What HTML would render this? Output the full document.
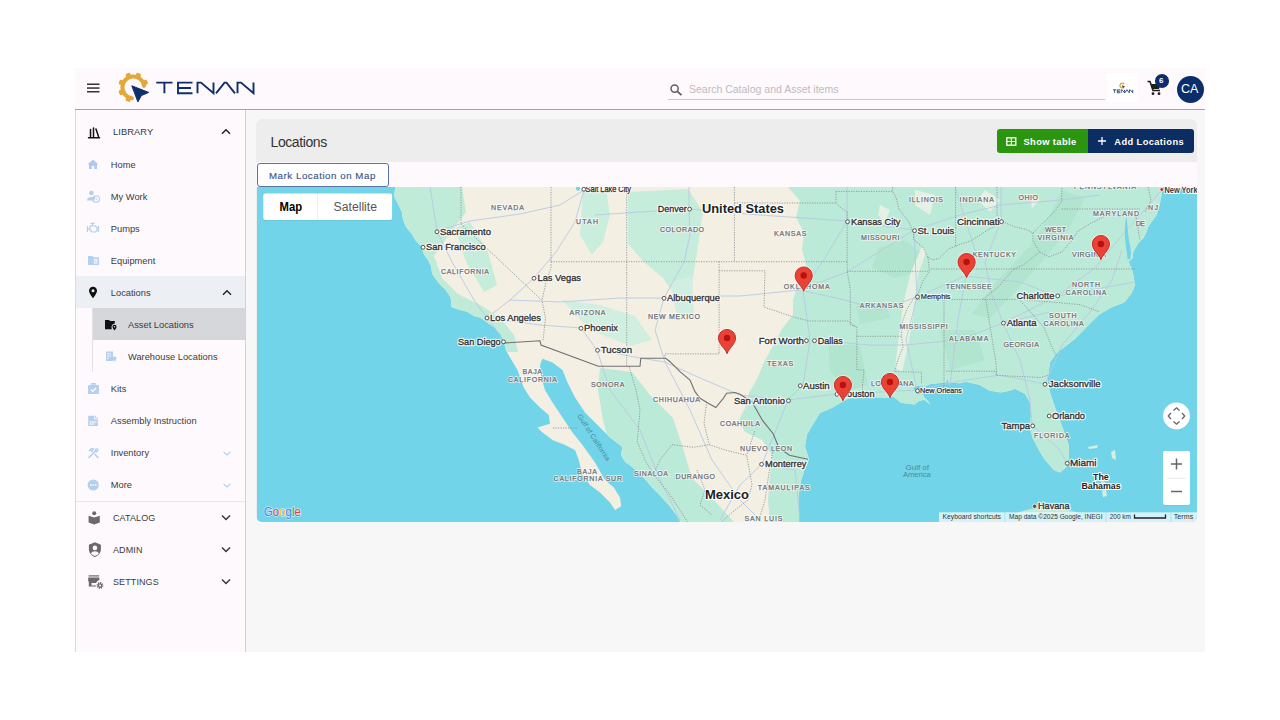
<!DOCTYPE html>
<html><head><meta charset="utf-8">
<style>
*{box-sizing:border-box;margin:0;padding:0}
html,body{width:1280px;height:720px;background:#fff;overflow:hidden;font-family:"Liberation Sans",sans-serif;position:relative}
.a{position:absolute}
#hdr{position:absolute;left:75px;top:68px;width:1130px;height:42px;background:#fdf9fd;border-bottom:1.5px solid #a6a4a6}
#side{position:absolute;left:75px;top:110px;width:171px;height:542px;background:#fdf9fd;border-left:1px solid #dcd9dc;border-right:1.5px solid #d3d1d3}
#main{position:absolute;left:246px;top:110px;width:959px;height:542px;background:#f7f7f7}
#card{position:absolute;left:256px;top:119px;width:941px;height:403px;border-radius:7px 7px 5px 5px;background:#ededed;overflow:hidden}
#tabrow{position:absolute;left:0;top:43px;width:941px;height:25px;background:#fdf9fd}
#map{position:absolute;left:1px;top:68px;width:940px;height:335px;background:#72d4e8;overflow:hidden;border-radius:0 0 5px 5px}
#map svg{position:absolute;left:0;top:0}
.t{position:absolute;white-space:nowrap;font-size:9.3px;color:#3d3a3d;line-height:1}
.sec{font-size:9px;color:#3d3a3d;letter-spacing:0.1px}
.ic{position:absolute;overflow:visible}

</style></head><body>
<div id="main"></div>
<div id="hdr"></div>
<div id="side"></div>
<!-- header -->
<svg class="ic" style="left:87px;top:83px" width="13" height="10" viewBox="0 0 13 10"><rect x="0" y="0.5" width="12.5" height="1.5" fill="#333"/><rect x="0" y="4.3" width="12.5" height="1.5" fill="#333"/><rect x="0" y="8" width="12.5" height="1.5" fill="#333"/></svg>
<svg class="ic" style="left:116px;top:70px" width="142" height="36" viewBox="116 70 142 36">
 <path d="M131.97,98.22 A10.9,10.9 0 1,1 144.09,85.88" fill="none" stroke="#e2a93a" stroke-width="4" stroke-linecap="round"/><rect x="130.80" y="72.20" width="5" height="4.5" rx="1.4" fill="#e2a93a" transform="rotate(202.5 133.3 87.4)"/><rect x="130.80" y="72.20" width="5" height="4.5" rx="1.4" fill="#e2a93a" transform="rotate(247.5 133.3 87.4)"/><rect x="130.80" y="72.20" width="5" height="4.5" rx="1.4" fill="#e2a93a" transform="rotate(292.5 133.3 87.4)"/><rect x="130.80" y="72.20" width="5" height="4.5" rx="1.4" fill="#e2a93a" transform="rotate(337.5 133.3 87.4)"/><rect x="130.80" y="72.20" width="5" height="4.5" rx="1.4" fill="#e2a93a" transform="rotate(382.5 133.3 87.4)"/><rect x="130.80" y="72.20" width="5" height="4.5" rx="1.4" fill="#e2a93a" transform="rotate(427.5 133.3 87.4)"/>
 <path d="M131.8,85.8 L148.7,92.4 L141.4,95.6 L137.9,101.9 Z" fill="#0e2f6a" stroke="#0e2f6a" stroke-width="1" stroke-linejoin="round"/>
 <g fill="none" stroke="#0e2f6a" stroke-width="1.9">
  <path d="M156.3,82.6 H172.5 M164.4,82.6 V93.3"/>
  <path d="M192.5,82.6 H178 V93.3 H192.5 M178,88 H191"/>
  <path d="M197.5,93.3 V82.6 H201 L213.5,93.3 V82.6" stroke-linejoin="miter"/>
  <path d="M216,93.3 L224.5,82.6 H226.5 L235,93.3"/>
  <path d="M237.5,93.3 V82.6 H241 L253.5,93.3 V82.6"/>
 </g>
</svg>
<svg class="ic" style="left:670px;top:84px" width="13" height="12" viewBox="0 0 13 12"><circle cx="4.6" cy="4.6" r="3.6" fill="none" stroke="#5f5f5f" stroke-width="1.5"/><path d="M7.3,7.3 L11.5,11.2" stroke="#5f5f5f" stroke-width="1.8"/></svg>
<div class="t" style="left:689px;top:84px;font-size:10.5px;color:#bdbbbd">Search Catalog and Asset items</div>
<div class="a" style="left:668px;top:99px;width:437px;height:1.3px;background:#c9c7c9"></div>
<div class="a" style="left:1107px;top:73px;width:31px;height:29px;background:#fff"></div>
<svg class="ic" style="left:1100px;top:75px" width="40" height="25" viewBox="1100 75 40 25">
<circle cx="1122.3" cy="85.6" r="2.3" fill="none" stroke="#e2a93a" stroke-width="1.3" stroke-dasharray="11,3.5" transform="rotate(20 1122.3 85.6)"/>
<path d="M1121.8,85.2 L1125,86.4 L1123.6,86.9 L1123.1,88.3 Z" fill="#0e2f6a"/>
<g fill="none" stroke="#0e2f6a" stroke-width="0.8" transform="translate(1081.01,66.67) scale(0.204,0.28)" vector-effect="non-scaling-stroke">
  <path vector-effect="non-scaling-stroke" d="M156.3,82.6 H172.5 M164.4,82.6 V93.3"/>
  <path vector-effect="non-scaling-stroke" d="M192.5,82.6 H178 V93.3 H192.5 M178,88 H191"/>
  <path vector-effect="non-scaling-stroke" d="M197.5,93.3 V82.6 H201 L213.5,93.3 V82.6"/>
  <path vector-effect="non-scaling-stroke" d="M216,93.3 L224.5,82.6 H226.5 L235,93.3"/>
  <path vector-effect="non-scaling-stroke" d="M237.5,93.3 V82.6 H241 L253.5,93.3 V82.6"/>
</g></svg>
<svg class="ic" style="left:1147px;top:80px" width="15" height="16" viewBox="0 0 15 16"><path d="M0.5,1.5 H3 L6,10.5 H13" fill="none" stroke="#1d1d1d" stroke-width="1.6"/><path d="M4,4 H13.5 L12,9 H5.5 Z" fill="#1d1d1d"/><circle cx="6" cy="13.7" r="1.4" fill="#1d1d1d"/><circle cx="12" cy="13.7" r="1.4" fill="#1d1d1d"/></svg>
<div class="a" style="left:1155px;top:74px;width:14px;height:13.5px;border-radius:50%;background:#0c2d6b"></div>
<div class="t" style="left:1159px;top:76.5px;font-size:8px;font-weight:700;color:#fff">6</div>
<div class="a" style="left:1176.5px;top:75.5px;width:27px;height:27px;border-radius:50%;background:#0c2d6b"></div>
<div class="t" style="left:1181px;top:83px;font-size:12.5px;color:#fff">CA</div>

<!-- sidebar -->
<div class="a" style="left:76px;top:276px;width:168.5px;height:32px;background:#eceff3"></div>
<div class="a" style="left:93px;top:308px;width:151.5px;height:32px;background:#d5d7db"></div>
<div class="a" style="left:92px;top:308px;width:1px;height:64px;background:#e3e1e6"></div>
<div class="a" style="left:76px;top:501px;width:168.5px;height:1px;background:#e8e6e9"></div>

<svg class="ic" style="left:87px;top:125px" width="14" height="14" viewBox="0 0 14 14"><g stroke="#111" stroke-width="1.5" stroke-linecap="round"><path d="M3.5,4.5 V11.5 M6.5,3 V11.5 M9,4 L11.5,11.5"/><path d="M1.5,12.7 H12.5"/></g></svg>
<div class="t sec" style="left:113px;top:128.3px;font-size:9.3px;color:#3a373a">LIBRARY</div>
<svg class="ic" style="left:221px;top:128px" width="10" height="7" viewBox="0 0 10 7"><path d="M1,5.8 L5,1.8 L9,5.8" fill="none" stroke="#222" stroke-width="1.5"/></svg>

<svg class="ic" style="left:87px;top:158px" width="12" height="12" viewBox="0 0 12 12"><path d="M6,1.5 L11.5,6.5 H10 V11 H7.3 V8 H4.7 V11 H2 V6.5 H0.5 Z" fill="#aecbed"/></svg>
<div class="t" style="left:110.8px;top:161.1px">Home</div>
<svg class="ic" style="left:86px;top:189px" width="16" height="14" viewBox="0 0 16 14"><circle cx="5.4" cy="4" r="2.3" fill="#b2cfee"/><path d="M1,11.5 C1,9 3.5,8 6,8 L9,8 L8.5,11.5 Z" fill="#b2cfee"/><circle cx="10.2" cy="10" r="3.3" fill="none" stroke="#b2cfee" stroke-width="1.1"/><path d="M10,8.3 V10.2 L11.2,11.2" stroke="#b2cfee" stroke-width="0.9" fill="none"/></svg>
<div class="t" style="left:110.8px;top:193.1px">My Work</div>
<svg class="ic" style="left:86px;top:221px" width="14" height="13" viewBox="0 0 14 13"><g fill="none" stroke="#b2cfee" stroke-width="1.2"><path d="M4.5,2.3 H8.5 M6.5,2.3 V4.5 M4,5 H9.5 L11,6.8 V9.5 L9.5,11 H6 L4,9 Z M1.5,5 V11 M1.5,8 H4 M12.5,5 V11 M11,8 H12.5"/></g></svg>
<div class="t" style="left:110.8px;top:225.1px">Pumps</div>
<svg class="ic" style="left:87px;top:255px" width="13" height="11" viewBox="0 0 13 11"><path d="M1,1 H5.5 L6.5,2.2 H12 V10 H1 Z" fill="#b5d0ee"/><rect x="7" y="3.8" width="3.5" height="4.8" fill="#fdf9fd"/><path d="M8.75,3.8 V8.6 M7,6.2 H10.5" stroke="#b5d0ee" stroke-width="0.6"/></svg>
<div class="t" style="left:110.8px;top:257.1px">Equipment</div>

<svg class="ic" style="left:88px;top:286px" width="10" height="13" viewBox="0 0 10 13"><path d="M5,0.8 C2.5,0.8 1,2.6 1,4.8 C1,7.6 5,12.3 5,12.3 C5,12.3 9,7.6 9,4.8 C9,2.6 7.5,0.8 5,0.8 Z" fill="#111"/><circle cx="5" cy="4.8" r="1.5" fill="#eceff3"/></svg>
<div class="t" style="left:110.8px;top:289.1px">Locations</div>
<svg class="ic" style="left:222px;top:289px" width="10" height="7" viewBox="0 0 10 7"><path d="M1,5.8 L5,1.8 L9,5.8" fill="none" stroke="#222" stroke-width="1.4"/></svg>

<svg class="ic" style="left:104px;top:319px" width="14" height="12" viewBox="0 0 14 12"><path d="M1,1 H5 L6.2,2 H10.8 V4.5 C8.5,4.8 7.5,6.5 7.5,8.5 L7.8,10.2 H1 Z" fill="#111"/><path d="M10.5,5.8 C9.2,5.8 8.5,6.7 8.5,7.8 C8.5,9.2 10.5,11.5 10.5,11.5 C10.5,11.5 12.5,9.2 12.5,7.8 C12.5,6.7 11.8,5.8 10.5,5.8 Z" fill="#111"/><circle cx="10.5" cy="7.8" r="0.7" fill="#d5d7db"/></svg>
<div class="t" style="left:128px;top:321.1px">Asset Locations</div>
<svg class="ic" style="left:104px;top:350px" width="14" height="13" viewBox="0 0 14 13"><g fill="#b5d0ee"><rect x="2" y="1.5" width="7" height="9.5"/></g><g fill="#fdf9fd"><rect x="3.3" y="3" width="1.3" height="1.3"/><rect x="5.5" y="3" width="1.3" height="1.3"/><rect x="3.3" y="5.3" width="1.3" height="1.3"/><rect x="5.5" y="5.3" width="1.3" height="1.3"/><rect x="3.3" y="7.6" width="1.3" height="1.3"/></g><path d="M10.5,6.5 C9.4,6.5 8.6,7.3 8.6,8.3 C8.6,9.6 10.5,11.8 10.5,11.8 C10.5,11.8 12.4,9.6 12.4,8.3 C12.4,7.3 11.6,6.5 10.5,6.5 Z" fill="#b5d0ee"/></svg>
<div class="t" style="left:128px;top:353.1px">Warehouse Locations</div>

<svg class="ic" style="left:87px;top:382px" width="13" height="13" viewBox="0 0 13 13"><path d="M4.3,3 V1.5 H8.7 V3 M5.5,3 V2.6 H7.5 V3" fill="none" stroke="#b5d0ee" stroke-width="1"/><rect x="1" y="3" width="11" height="9" rx="0.8" fill="#b5d0ee"/><path d="M4,7.5 L5.8,9.3 L9,6" fill="none" stroke="#fff" stroke-width="1.2"/></svg>
<div class="t" style="left:110.8px;top:385.1px">Kits</div>
<svg class="ic" style="left:87px;top:414px" width="12" height="13" viewBox="0 0 12 13"><path d="M1.2,1.8 H8 L10.8,4.6 V12 H1.2 Z" fill="#b5d0ee"/><path d="M7.5,2.5 V5 H10" fill="none" stroke="#fff" stroke-width="0.9"/><path d="M2.5,8 H9.5 M2.5,10 H7.5" stroke="#fff" stroke-width="1"/></svg>
<div class="t" style="left:110.8px;top:417.1px">Assembly Instruction</div>
<svg class="ic" style="left:87px;top:446px" width="13" height="13" viewBox="0 0 13 13"><g fill="none" stroke="#b2cfee" stroke-width="1.6" stroke-linecap="round"><path d="M2,11.5 L9,4.5 M8,8.5 L11,11.5"/><path d="M2.5,4.5 L4.5,2.5 L6.5,3 L5,5.5 Z" stroke-width="1.4"/><path d="M10.5,3 C11.5,4 11,5.5 9.5,5.8 L8.5,4.5 C8.5,3 9.5,2.5 10.5,3 Z" stroke-width="1.2"/></g></svg>
<div class="t" style="left:110.8px;top:449.1px">Inventory</div>
<svg class="ic" style="left:222px;top:450px" width="10" height="7" viewBox="0 0 10 7"><path d="M1.5,1.8 L5,5 L8.5,1.8" fill="none" stroke="#b2cfee" stroke-width="1.1"/></svg>
<svg class="ic" style="left:87px;top:479px" width="13" height="13" viewBox="0 0 13 13"><circle cx="6.2" cy="6" r="5.6" fill="#b5d0ee"/><rect x="3" y="5.2" width="1.5" height="1.5" fill="#fff"/><rect x="5.5" y="5.2" width="1.5" height="1.5" fill="#fff"/><rect x="8" y="5.2" width="1.5" height="1.5" fill="#fff"/></svg>
<div class="t" style="left:110.8px;top:481.1px">More</div>
<svg class="ic" style="left:222px;top:482px" width="10" height="7" viewBox="0 0 10 7"><path d="M1.5,1.8 L5,5 L8.5,1.8" fill="none" stroke="#b2cfee" stroke-width="1.1"/></svg>

<svg class="ic" style="left:87px;top:510px" width="14" height="15" viewBox="0 0 14 15"><circle cx="7.2" cy="3.2" r="2" fill="#6b696b"/><path d="M1.6,5.8 L7.2,7.6 L12.8,5.8 V12.6 L7.2,14.6 L1.6,12.6 Z" fill="#6b696b"/></svg>
<div class="t sec" style="left:113px;top:514.3px">CATALOG</div>
<svg class="ic" style="left:221px;top:514px" width="10" height="7" viewBox="0 0 10 7"><path d="M1,1.5 L5,5.5 L9,1.5" fill="none" stroke="#333" stroke-width="1.4"/></svg>
<svg class="ic" style="left:87.5px;top:542.3px" width="14" height="16" viewBox="0 0 14 16"><path d="M6.9,0.3 L0.9,2.8 V7.3 C0.9,10.9 3.5,13.9 6.9,15 C10.3,13.9 12.9,10.9 12.9,7.3 V2.8 Z" fill="#6b696b"/><circle cx="6.9" cy="5.9" r="2.3" fill="#fdf9fd"/><path d="M2.9,11.6 C3.7,10.1 5.1,9.3 6.9,9.3 C8.7,9.3 10.1,10.1 10.9,11.6 C9.9,12.8 8.5,13.6 6.9,14 C5.3,13.6 3.9,12.8 2.9,11.6 Z" fill="#fdf9fd"/></svg>
<div class="t sec" style="left:113px;top:546.3px">ADMIN</div>
<svg class="ic" style="left:221px;top:546px" width="10" height="7" viewBox="0 0 10 7"><path d="M1,1.5 L5,5.5 L9,1.5" fill="none" stroke="#333" stroke-width="1.4"/></svg>
<svg class="ic" style="left:87px;top:574px" width="17" height="16" viewBox="0 0 17 16"><rect x="1.6" y="1.3" width="10.5" height="1.2" fill="#6b696b"/><path d="M1.2,3.5 H12.2 L12.5,6 C10.5,6.5 9.5,8 9.2,9 H4.5 V11.5 H8.8 L9,12.4 H1.8 V7.4 H1.2 Z" fill="#6b696b"/><circle cx="13" cy="11.5" r="2.6" fill="none" stroke="#6b696b" stroke-width="1.6" stroke-dasharray="1.2,0.8"/><circle cx="13" cy="11.5" r="1.6" fill="none" stroke="#6b696b" stroke-width="1.2"/></svg>
<div class="t sec" style="left:113px;top:578.3px">SETTINGS</div>
<svg class="ic" style="left:221px;top:578px" width="10" height="7" viewBox="0 0 10 7"><path d="M1,1.5 L5,5.5 L9,1.5" fill="none" stroke="#333" stroke-width="1.4"/></svg>

<!-- card -->
<div id="card">
 <div id="tabrow"></div>
 <div id="map"><svg width="940" height="335" viewBox="257 187 940 335" font-family="Liberation Sans, sans-serif">
<defs><clipPath id="lc"><polygon points="395.4,187.0 1162.5,187.0 1161.7,195.0 1159.2,206.7 1156.7,215.0 1151.7,221.7 1148.3,226.7 1146.7,231.7 1143.3,238.3 1138.3,243.3 1133.3,251.7 1132.5,258.3 1128.3,261.7 1131.7,268.3 1133.3,275.0 1135.0,285.0 1131.7,293.3 1125.0,301.7 1122.6,303.0 1110.8,307.7 1099.0,314.8 1087.2,326.6 1075.4,338.4 1063.6,347.8 1057.5,352.0 1050.0,362.5 1047.5,380.0 1050.0,392.5 1056.0,410.0 1062.5,427.5 1068.8,445.0 1068.8,457.5 1066.0,467.5 1060.0,472.5 1053.8,470.0 1045.0,460.0 1038.8,450.0 1032.5,437.5 1030.0,427.5 1031.0,415.0 1030.0,402.5 1025.0,393.8 1015.0,388.8 1010.5,390.5 1000.8,392.5 989.0,390.5 979.4,384.7 965.8,381.8 960.0,383.3 948.5,382.5 948.3,378.0 946.0,382.5 938.0,383.3 930.3,384.0 924.8,386.4 916.3,385.6 913.0,388.0 916.3,393.4 924.0,395.0 924.0,397.3 928.0,401.0 930.3,405.2 928.0,402.8 924.0,399.7 918.6,401.3 914.7,404.4 906.9,403.6 900.6,402.8 897.5,399.7 892.8,396.6 887.3,398.1 875.6,397.3 860.0,398.1 849.0,398.3 841.4,402.2 831.7,408.0 820.0,413.0 813.0,424.3 807.0,434.4 805.0,446.5 809.0,459.6 805.0,468.6 801.0,480.7 799.0,492.8 799.0,505.0 799.0,523.0 681.0,523.0 680.2,521.5 676.7,515.6 669.6,506.1 660.1,495.5 651.9,487.2 644.8,479.0 637.7,471.9 629.4,464.8 625.0,462.0 621.0,455.0 622.4,447.0 610.0,437.5 597.5,425.0 585.0,412.5 575.0,397.5 567.5,382.5 562.5,370.0 552.5,362.5 542.5,358.8 540.0,365.0 541.2,377.5 545.0,390.0 552.5,402.5 562.5,417.5 572.5,432.5 582.5,445.0 595.0,462.5 605.0,480.0 613.8,487.5 620.0,497.5 621.2,506.2 615.0,510.0 610.0,502.5 600.0,492.5 590.0,485.0 582.5,475.0 578.8,460.0 575.0,450.0 565.0,445.0 552.5,440.0 542.5,432.5 537.5,427.5 550.0,423.8 548.8,415.0 540.0,407.5 530.0,397.5 523.8,387.5 517.5,370.0 510.0,357.5 506.1,350.6 503.9,341.7 500.6,333.9 493.9,327.2 486.1,321.7 480.6,317.8 473.9,316.1 467.2,311.7 458.3,309.4 451.7,307.2 450.6,297.2 446.1,290.6 438.3,282.8 432.2,273.9 430.8,265.6 428.0,260.0 424.0,254.4 421.0,246.0 415.6,240.6 411.4,233.6 405.8,226.7 403.0,219.7 401.7,211.4 397.5,203.0 394.0,196.0"/></clipPath></defs>
<rect x="257" y="187" width="940" height="335" fill="#72d4e8"/>
<polygon points="395.4,187.0 1162.5,187.0 1161.7,195.0 1159.2,206.7 1156.7,215.0 1151.7,221.7 1148.3,226.7 1146.7,231.7 1143.3,238.3 1138.3,243.3 1133.3,251.7 1132.5,258.3 1128.3,261.7 1131.7,268.3 1133.3,275.0 1135.0,285.0 1131.7,293.3 1125.0,301.7 1122.6,303.0 1110.8,307.7 1099.0,314.8 1087.2,326.6 1075.4,338.4 1063.6,347.8 1057.5,352.0 1050.0,362.5 1047.5,380.0 1050.0,392.5 1056.0,410.0 1062.5,427.5 1068.8,445.0 1068.8,457.5 1066.0,467.5 1060.0,472.5 1053.8,470.0 1045.0,460.0 1038.8,450.0 1032.5,437.5 1030.0,427.5 1031.0,415.0 1030.0,402.5 1025.0,393.8 1015.0,388.8 1010.5,390.5 1000.8,392.5 989.0,390.5 979.4,384.7 965.8,381.8 960.0,383.3 948.5,382.5 948.3,378.0 946.0,382.5 938.0,383.3 930.3,384.0 924.8,386.4 916.3,385.6 913.0,388.0 916.3,393.4 924.0,395.0 924.0,397.3 928.0,401.0 930.3,405.2 928.0,402.8 924.0,399.7 918.6,401.3 914.7,404.4 906.9,403.6 900.6,402.8 897.5,399.7 892.8,396.6 887.3,398.1 875.6,397.3 860.0,398.1 849.0,398.3 841.4,402.2 831.7,408.0 820.0,413.0 813.0,424.3 807.0,434.4 805.0,446.5 809.0,459.6 805.0,468.6 801.0,480.7 799.0,492.8 799.0,505.0 799.0,523.0 681.0,523.0 680.2,521.5 676.7,515.6 669.6,506.1 660.1,495.5 651.9,487.2 644.8,479.0 637.7,471.9 629.4,464.8 625.0,462.0 621.0,455.0 622.4,447.0 610.0,437.5 597.5,425.0 585.0,412.5 575.0,397.5 567.5,382.5 562.5,370.0 552.5,362.5 542.5,358.8 540.0,365.0 541.2,377.5 545.0,390.0 552.5,402.5 562.5,417.5 572.5,432.5 582.5,445.0 595.0,462.5 605.0,480.0 613.8,487.5 620.0,497.5 621.2,506.2 615.0,510.0 610.0,502.5 600.0,492.5 590.0,485.0 582.5,475.0 578.8,460.0 575.0,450.0 565.0,445.0 552.5,440.0 542.5,432.5 537.5,427.5 550.0,423.8 548.8,415.0 540.0,407.5 530.0,397.5 523.8,387.5 517.5,370.0 510.0,357.5 506.1,350.6 503.9,341.7 500.6,333.9 493.9,327.2 486.1,321.7 480.6,317.8 473.9,316.1 467.2,311.7 458.3,309.4 451.7,307.2 450.6,297.2 446.1,290.6 438.3,282.8 432.2,273.9 430.8,265.6 428.0,260.0 424.0,254.4 421.0,246.0 415.6,240.6 411.4,233.6 405.8,226.7 403.0,219.7 401.7,211.4 397.5,203.0 394.0,196.0" fill="#f3efe3"/>
<g clip-path="url(#lc)">
 <polygon points="788.0,187.0 1200.0,187.0 1200.0,523.0 770.0,523.0 768.0,500.0 770.0,475.0 772.0,455.0 762.0,440.0 745.0,432.0 739.0,420.0 745.0,408.0 749.0,393.0 758.0,377.0 764.0,362.0 774.0,344.0 782.0,329.0 793.0,315.0 793.0,300.0 799.0,281.0 806.0,265.0 802.0,249.0 804.0,233.0 796.0,217.0 800.0,201.0" fill="#bbead8"/>
 <polygon points="600.0,368.0 632.0,372.0 650.0,395.0 673.0,418.0 683.0,448.0 692.0,478.0 712.0,498.0 735.0,523.0 640.0,523.0 612.0,455.0 603.0,420.0 598.0,390.0" fill="#bbead8"/>
 <polygon points="380.0,187.0 462.0,187.0 466.0,212.0 448.0,236.0 434.0,256.0 442.0,278.0 458.0,294.0 482.0,306.0 500.0,318.0 514.0,335.0 518.0,352.0 380.0,352.0" fill="#c0ebd9"/>
 <polygon points="455.0,228.0 470.0,222.0 488.0,252.0 497.0,285.0 484.0,292.0 466.0,262.0" fill="#c6eddc"/>
 <polygon points="583.0,190.0 606.0,190.0 610.0,215.0 603.0,242.0 592.0,255.0 580.0,235.0" fill="#c9eedd"/>
 <polygon points="628.0,192.0 688.0,189.0 703.0,212.0 698.0,246.0 692.0,284.0 678.0,300.0 663.0,278.0 644.0,262.0 628.0,244.0" fill="#c6eddc"/>
 <polygon points="562.0,300.0 600.0,305.0 635.0,316.0 652.0,340.0 630.0,346.0 590.0,330.0" fill="#d0efe0"/>
 <polygon points="670.0,282.0 692.0,276.0 694.0,318.0 676.0,312.0" fill="#d0efe0"/>
 <polygon points="878.0,248.0 905.0,240.0 920.0,252.0 918.0,272.0 895.0,278.0 872.0,268.0" fill="#b2e5cf"/><polygon points="856.0,306.0 885.0,302.0 890.0,318.0 860.0,324.0" fill="#b2e5cf"/><polygon points="1062.0,190.0 1085.0,198.0 1068.0,230.0 1045.0,258.0 1015.0,292.0 990.0,318.0 972.0,314.0 996.0,282.0 1030.0,246.0 1050.0,215.0" fill="#b2e5cf"/><polygon points="828.0,345.0 860.0,345.0 868.0,385.0 845.0,392.0 830.0,370.0" fill="#b2e5cf"/><polygon points="940.0,330.0 975.0,330.0 985.0,360.0 950.0,370.0" fill="#b2e5cf"/><polygon points="922.0,246.0 926.0,252.0 918.0,275.0 915.0,300.0 911.0,330.0 907.0,350.0 902.0,372.0 895.0,368.0 899.0,335.0 903.0,305.0 910.0,275.0" fill="#e6f1e4"/><polygon points="880.0,205.0 890.0,210.0 885.0,222.0 878.0,215.0" fill="#e6f1e4"/><polygon points="1030.0,195.0 1040.0,200.0 1032.0,208.0" fill="#e6f1e4"/><polygon points="915.0,190.0 935.0,195.0 930.0,215.0 915.0,205.0" fill="#e6f1e4"/><polygon points="985.0,190.0 1000.0,200.0 990.0,212.0 978.0,200.0" fill="#e6f1e4"/>
</g>
<ellipse cx="578" cy="188.5" rx="2" ry="2.2" fill="#72d4e8"/>
<path d="M1018,512.5 C1030,508 1045,507 1060,509 C1068,510 1075,512 1080,513 L1018,514 Z" fill="#c0ebd9"/>
<g fill="#d6efe0"><path d="M1101,481 L1105,482 L1107,496 L1103,497 Z"/><path d="M1111,452 L1115,450 L1116,460 L1112,458 Z"/><path d="M1088,447 L1098,445 L1097,448 L1089,449 Z"/></g>
<g fill="none" stroke="#b9c8e3" stroke-width="0.9" stroke-linejoin="round"><polyline points="430.0,187.0 437.0,231.0 452.0,262.0 474.0,300.0 487.0,318.0 495.0,328.0 503.0,341.0"/><polyline points="437.0,231.0 470.0,221.0 520.0,214.0 560.0,205.0 584.0,190.0"/><polyline points="487.0,318.0 510.0,300.0 534.0,278.0 556.0,252.0 575.0,222.0 584.0,190.0"/><polyline points="487.0,318.0 540.0,325.0 581.0,328.0 597.0,350.0 640.0,358.0 665.0,362.0 700.0,378.0 740.0,395.0 788.0,400.0 837.0,394.0 880.0,392.0 917.0,390.0 960.0,381.0 1000.0,375.0 1045.0,384.0"/><polyline points="510.0,300.0 560.0,302.0 620.0,298.0 664.0,298.0 700.0,296.0 740.0,296.0 800.0,290.0 845.0,300.0 880.0,310.0 917.0,297.0 965.0,276.0 1020.0,282.0 1057.0,296.0 1090.0,290.0 1135.0,282.0"/><polyline points="689.0,187.0 689.0,209.0 690.0,235.0 684.0,262.0 664.0,298.0 655.0,330.0 665.0,362.0"/><polyline points="595.0,215.0 640.0,212.0 689.0,209.0 760.0,215.0 847.0,221.0 914.0,230.0 960.0,215.0 1001.0,205.0 1061.0,200.0 1100.0,195.0"/><polyline points="847.0,187.0 847.0,221.0 825.0,258.0 803.0,290.0 810.0,340.0 803.0,385.0 788.0,400.0 772.0,440.0 762.0,464.0"/><polyline points="914.0,230.0 917.0,297.0 906.0,340.0 917.0,390.0"/><polyline points="955.0,187.0 975.0,250.0 966.0,276.0 958.0,320.0 950.0,385.0"/><polyline points="1001.0,187.0 1001.0,221.0 985.0,262.0 992.0,295.0 1003.0,323.0 1020.0,360.0 1030.0,400.0 1032.0,425.0 1060.0,450.0 1067.0,463.0"/><polyline points="1003.0,323.0 1057.0,296.0 1095.0,268.0 1118.0,240.0 1140.0,215.0 1162.0,190.0"/><polyline points="1045.0,384.0 1062.0,345.0 1090.0,312.0 1112.0,280.0 1122.0,250.0"/><polyline points="814.0,340.0 870.0,345.0 905.0,345.0 960.0,340.0 1003.0,323.0 1050.0,312.0"/><polyline points="800.0,290.0 847.0,272.0 914.0,230.0"/><polyline points="597.0,350.0 610.0,390.0 640.0,430.0 660.0,480.0 680.0,520.0"/><polyline points="665.0,362.0 690.0,410.0 712.0,460.0 740.0,500.0 760.0,520.0"/><polyline points="762.0,464.0 740.0,485.0 720.0,520.0"/><polyline points="762.0,464.0 795.0,470.0 800.0,520.0"/></g>
<path d="M1126.5,217 C1128,225 1127.5,235 1130,245 C1131,250 1131.5,255 1130,259 L1127.5,259.5 C1127,252 1125.5,245 1125,238 C1124.5,230 1125,222 1126.5,217 Z" fill="#72d4e8"/>
<g fill="none" stroke="#8f9396" stroke-width="0.9" stroke-dasharray="1.2,1.3"><polyline points="461.0,187.0 461.0,224.0 542.0,300.5 545.5,318.0 543.0,341.0"/><polyline points="551.0,187.0 551.0,261.7"/><polyline points="551.0,261.7 551.0,268.0 546.0,282.0 542.0,300.5"/><polyline points="551.0,261.7 847.2,261.7"/><polyline points="626.7,187.0 626.7,366.2"/><polyline points="734.4,187.0 734.4,261.7"/><polyline points="719.1,261.7 719.1,353.9 665.0,353.9 665.0,358.3"/><polyline points="719.1,270.8 765.0,270.8 764.0,307.0 793.4,317.0 809.0,321.0 848.0,321.0 855.6,326.7"/><polyline points="836.0,191.4 892.7,191.4"/><polyline points="734.4,203.0 836.0,203.0 840.0,207.0 847.2,212.0"/><polyline points="836.0,191.4 836.0,203.0"/><polyline points="847.2,212.0 847.2,261.7 847.2,271.3 850.4,290.0 850.4,325.0 856.8,326.7 856.8,336.3 900.7,336.3"/><polyline points="856.8,336.3 856.8,370.0 864.0,370.0 862.4,385.8 863.0,396.0"/><polyline points="847.2,271.3 929.5,271.3"/><polyline points="892.7,187.0 892.7,191.4 896.0,197.8 899.0,209.0 908.7,221.7 913.5,233.0 913.5,239.3 923.0,247.3 927.9,256.9 932.7,260.0 939.0,258.5 948.6,249.0 960.0,244.5 970.8,240.9 988.3,229.7 1002.7,221.7 1013.9,226.5 1026.7,229.7 1033.0,233.0 1045.8,220.0 1055.4,210.6 1061.8,201.0 1061.8,187.0"/><polyline points="927.9,256.9 929.5,271.3 923.0,280.8 918.3,293.6 915.0,296.4 907.0,309.0 902.3,322.0 901.5,336.3 903.0,347.5 899.0,357.0 894.3,371.5 921.5,372.3 921.5,384.0"/><polyline points="955.6,187.0 955.6,245.7"/><polyline points="997.0,187.0 997.0,217.0"/><polyline points="1061.8,209.0 1110.0,209.0 1140.0,209.0"/><polyline points="1033.0,233.0 1033.0,241.0 1039.5,252.0 1023.5,264.9 1014.0,268.9"/><polyline points="1039.5,252.0 1049.0,256.9 1061.8,252.0 1071.4,241.0 1077.8,231.3 1090.6,223.3 1103.4,217.0 1112.0,212.0"/><polyline points="931.0,269.0 1135.0,269.0"/><polyline points="1014.0,268.9 998.0,287.2 982.0,300.0"/><polyline points="916.7,299.6 1019.0,299.4 1056.7,302.5 1080.0,304.6 1100.0,312.0"/><polyline points="944.0,299.6 944.0,386.0"/><polyline points="985.8,299.4 996.3,365.0 996.3,375.4"/><polyline points="1019.0,299.4 1029.6,310.8 1044.0,327.5 1052.5,348.3 1056.7,356.7"/><polyline points="946.2,371.2 996.3,371.2 996.3,375.4 1040.0,377.5 1048.3,375.4"/><polyline points="1135.7,215.0 1140.0,240.0"/><polyline points="1148.0,187.0 1151.0,200.0 1145.0,212.0"/><polyline points="629.3,367.3 636.0,390.0 640.0,410.0 637.3,442.0 645.0,460.0 653.3,474.0 668.0,492.0 680.0,510.0 688.0,523.0"/><polyline points="706.7,402.0 704.0,423.3 709.3,444.7 693.3,447.3 672.0,444.7 660.0,460.0 653.3,474.0"/><polyline points="709.3,444.7 725.0,450.0 746.7,455.3 752.0,484.7 748.0,500.0 735.0,510.0 720.0,523.0"/><polyline points="754.7,431.3 746.7,455.3"/><polyline points="773.3,447.3 768.0,479.3 765.0,500.0 760.0,516.7"/><polyline points="553.0,428.0 578.0,428.0"/><polyline points="697.0,470.0 705.0,490.0 700.0,505.0 712.0,515.0"/></g>
<polyline points="503.9,343.0 540.0,340.8 541.0,345.0 598.3,366.2 640.0,366.2 640.8,358.3 665.8,358.3 670.0,361.7 680.0,371.7 690.0,380.0 695.0,391.7 700.0,398.3 708.3,403.3 715.8,407.5 723.3,398.3 726.7,393.3 735.0,392.5 740.0,394.2 752.0,402.0 762.7,420.7 773.3,434.0 778.7,447.3 789.3,455.3 808.0,459.3" fill="none" stroke="#707070" stroke-width="1.1"/>
<g font-size="9.5" fill="#fff" stroke="#fff" stroke-width="2.6" stroke-opacity="0.9" stroke-linejoin="round">
<text x="585.6" y="192.4" textLength="45.4" lengthAdjust="spacingAndGlyphs">Salt Lake City</text>
<text x="657.8" y="212.2" textLength="28.9" lengthAdjust="spacingAndGlyphs">Denver</text>
<text x="440" y="234.9" textLength="51.0" lengthAdjust="spacingAndGlyphs">Sacramento</text>
<text x="426" y="250.4" textLength="59.6" lengthAdjust="spacingAndGlyphs">San Francisco</text>
<text x="537.5" y="281.4" textLength="43.5" lengthAdjust="spacingAndGlyphs">Las Vegas</text>
<text x="667" y="301.4" textLength="53.0" lengthAdjust="spacingAndGlyphs">Albuquerque</text>
<text x="490" y="321.1" textLength="51.0" lengthAdjust="spacingAndGlyphs">Los Angeles</text>
<text x="584" y="331.4" textLength="34.0" lengthAdjust="spacingAndGlyphs">Phoenix</text>
<text x="458" y="344.9" textLength="42.7" lengthAdjust="spacingAndGlyphs">San Diego</text>
<text x="600.8" y="353.4" textLength="31.2" lengthAdjust="spacingAndGlyphs">Tucson</text>
<text x="851" y="224.8" textLength="49.5" lengthAdjust="spacingAndGlyphs">Kansas City</text>
<text x="957" y="224.8" textLength="42.6" lengthAdjust="spacingAndGlyphs">Cincinnati</text>
<text x="917.5" y="233.8" textLength="36.8" lengthAdjust="spacingAndGlyphs">St. Louis</text>
<text x="1016.6" y="299.0" textLength="37.8" lengthAdjust="spacingAndGlyphs">Charlotte</text>
<text x="758.7" y="343.8" textLength="45.3" lengthAdjust="spacingAndGlyphs">Fort Worth</text>
<text x="817.8" y="343.8" textLength="25.0" lengthAdjust="spacingAndGlyphs">Dallas</text>
<text x="1006.7" y="326.2" textLength="29.8" lengthAdjust="spacingAndGlyphs">Atlanta</text>
<text x="803" y="388.8" textLength="26.6" lengthAdjust="spacingAndGlyphs">Austin</text>
<text x="840.5" y="397.4" textLength="34.0" lengthAdjust="spacingAndGlyphs">Houston</text>
<text x="1048.8" y="387.4" textLength="51.9" lengthAdjust="spacingAndGlyphs">Jacksonville</text>
<text x="734" y="403.8" textLength="51.0" lengthAdjust="spacingAndGlyphs">San Antonio</text>
<text x="1052" y="419.1" textLength="33.0" lengthAdjust="spacingAndGlyphs">Orlando</text>
<text x="1001.5" y="429.0" textLength="28.5" lengthAdjust="spacingAndGlyphs">Tampa</text>
<text x="765" y="467.4" textLength="41.4" lengthAdjust="spacingAndGlyphs">Monterrey</text>
<text x="1070" y="466.4" textLength="26.5" lengthAdjust="spacingAndGlyphs">Miami</text>
<text x="1038" y="509.4" textLength="31.5" lengthAdjust="spacingAndGlyphs">Havana</text>
</g>
<g font-size="9.5" fill="#333" stroke="#333" stroke-width="0.35" stroke-linejoin="round">
<text x="585.6" y="192.4" textLength="45.4" lengthAdjust="spacingAndGlyphs">Salt Lake City</text>
<text x="657.8" y="212.2" textLength="28.9" lengthAdjust="spacingAndGlyphs">Denver</text>
<text x="440" y="234.9" textLength="51.0" lengthAdjust="spacingAndGlyphs">Sacramento</text>
<text x="426" y="250.4" textLength="59.6" lengthAdjust="spacingAndGlyphs">San Francisco</text>
<text x="537.5" y="281.4" textLength="43.5" lengthAdjust="spacingAndGlyphs">Las Vegas</text>
<text x="667" y="301.4" textLength="53.0" lengthAdjust="spacingAndGlyphs">Albuquerque</text>
<text x="490" y="321.1" textLength="51.0" lengthAdjust="spacingAndGlyphs">Los Angeles</text>
<text x="584" y="331.4" textLength="34.0" lengthAdjust="spacingAndGlyphs">Phoenix</text>
<text x="458" y="344.9" textLength="42.7" lengthAdjust="spacingAndGlyphs">San Diego</text>
<text x="600.8" y="353.4" textLength="31.2" lengthAdjust="spacingAndGlyphs">Tucson</text>
<text x="851" y="224.8" textLength="49.5" lengthAdjust="spacingAndGlyphs">Kansas City</text>
<text x="957" y="224.8" textLength="42.6" lengthAdjust="spacingAndGlyphs">Cincinnati</text>
<text x="917.5" y="233.8" textLength="36.8" lengthAdjust="spacingAndGlyphs">St. Louis</text>
<text x="1016.6" y="299.0" textLength="37.8" lengthAdjust="spacingAndGlyphs">Charlotte</text>
<text x="758.7" y="343.8" textLength="45.3" lengthAdjust="spacingAndGlyphs">Fort Worth</text>
<text x="817.8" y="343.8" textLength="25.0" lengthAdjust="spacingAndGlyphs">Dallas</text>
<text x="1006.7" y="326.2" textLength="29.8" lengthAdjust="spacingAndGlyphs">Atlanta</text>
<text x="803" y="388.8" textLength="26.6" lengthAdjust="spacingAndGlyphs">Austin</text>
<text x="840.5" y="397.4" textLength="34.0" lengthAdjust="spacingAndGlyphs">Houston</text>
<text x="1048.8" y="387.4" textLength="51.9" lengthAdjust="spacingAndGlyphs">Jacksonville</text>
<text x="734" y="403.8" textLength="51.0" lengthAdjust="spacingAndGlyphs">San Antonio</text>
<text x="1052" y="419.1" textLength="33.0" lengthAdjust="spacingAndGlyphs">Orlando</text>
<text x="1001.5" y="429.0" textLength="28.5" lengthAdjust="spacingAndGlyphs">Tampa</text>
<text x="765" y="467.4" textLength="41.4" lengthAdjust="spacingAndGlyphs">Monterrey</text>
<text x="1070" y="466.4" textLength="26.5" lengthAdjust="spacingAndGlyphs">Miami</text>
<text x="1038" y="509.4" textLength="31.5" lengthAdjust="spacingAndGlyphs">Havana</text>
</g>
<g font-size="7.4" fill="#fff" stroke="#fff" stroke-width="2.2" stroke-opacity="0.9" stroke-linejoin="round">
<text x="920.8" y="299.3" textLength="29.7" lengthAdjust="spacingAndGlyphs">Memphis</text>
<text x="920" y="393.2" textLength="42.0" lengthAdjust="spacingAndGlyphs">New Orleans</text>
</g>
<g font-size="7.4" fill="#333" stroke="#333" stroke-width="0.25" stroke-linejoin="round">
<text x="920.8" y="299.3" textLength="29.7" lengthAdjust="spacingAndGlyphs">Memphis</text>
<text x="920" y="393.2" textLength="42.0" lengthAdjust="spacingAndGlyphs">New Orleans</text>
</g>
<g fill="#fff" stroke="#444" stroke-width="0.9">
<circle cx="583.8" cy="189.3" r="1.9"/>
<circle cx="689.6" cy="209.1" r="1.9"/>
<circle cx="437" cy="231.8" r="1.9"/>
<circle cx="423" cy="247.3" r="1.9"/>
<circle cx="534" cy="278.3" r="1.9"/>
<circle cx="664" cy="298.3" r="1.9"/>
<circle cx="487" cy="318.0" r="1.9"/>
<circle cx="581" cy="328.3" r="1.9"/>
<circle cx="503.5" cy="341.8" r="1.9"/>
<circle cx="597.5" cy="350.3" r="1.9"/>
<circle cx="847.5" cy="221.7" r="1.9"/>
<circle cx="1001.5" cy="221.7" r="1.9"/>
<circle cx="914.6" cy="230.7" r="1.9"/>
<circle cx="1057.7" cy="295.9" r="1.9"/>
<circle cx="806.4" cy="340.7" r="1.9"/>
<circle cx="814.5" cy="340.7" r="1.9"/>
<circle cx="1003.4" cy="323.1" r="1.9"/>
<circle cx="800.3" cy="385.7" r="1.9"/>
<circle cx="837" cy="394.3" r="1.9"/>
<circle cx="1045" cy="384.3" r="1.9"/>
<circle cx="788.5" cy="400.7" r="1.9"/>
<circle cx="1049.2" cy="416.0" r="1.9"/>
<circle cx="1032.7" cy="425.9" r="1.9"/>
<circle cx="761.6" cy="464.3" r="1.9"/>
<circle cx="1067.2" cy="463.3" r="1.9"/>
<circle cx="917.5" cy="296.9" r="1.9"/>
<circle cx="917.5" cy="390.8" r="1.9"/>
</g>
<circle cx="1034.6" cy="506.3" r="2.2" fill="#555" stroke="#fff" stroke-width="0.8"/>
<g font-size="7" fill="#fff" stroke="#fff" stroke-width="1.8" stroke-opacity="0.75" fill-opacity="0.75" stroke-linejoin="round">
<text x="491" y="210.2" textLength="33.0" lengthAdjust="spacing">NEVADA</text>
<text x="576" y="223.5" textLength="22.0" lengthAdjust="spacing">UTAH</text>
<text x="660" y="231.5" textLength="44.0" lengthAdjust="spacing">COLORADO</text>
<text x="441" y="273.9" textLength="48.0" lengthAdjust="spacing">CALIFORNIA</text>
<text x="569.6" y="315.0" textLength="35.9" lengthAdjust="spacing">ARIZONA</text>
<text x="648" y="318.5" textLength="52.0" lengthAdjust="spacing">NEW MEXICO</text>
<text x="522.4" y="374.1" textLength="19.6" lengthAdjust="spacing">BAJA</text>
<text x="508" y="381.5" textLength="49.0" lengthAdjust="spacing">CALIFORNIA</text>
<text x="591" y="387.3" textLength="33.4" lengthAdjust="spacing">SONORA</text>
<text x="653" y="401.5" textLength="47.0" lengthAdjust="spacing">CHIHUAHUA</text>
<text x="577" y="474.2" textLength="20.0" lengthAdjust="spacing">BAJA</text>
<text x="553.6" y="481.3" textLength="68.4" lengthAdjust="spacing">CALIFORNIA SUR</text>
<text x="634" y="475.5" textLength="34.0" lengthAdjust="spacing">SINALOA</text>
<text x="675.5" y="478.5" textLength="39.5" lengthAdjust="spacing">DURANGO</text>
<text x="1074" y="189.3" textLength="62.0" lengthAdjust="spacing">PENNSYLVANIA</text>
<text x="909" y="201.5" textLength="34.0" lengthAdjust="spacing">ILLINOIS</text>
<text x="959.5" y="201.5" textLength="34.5" lengthAdjust="spacing">INDIANA</text>
<text x="1018.5" y="200.3" textLength="19.5" lengthAdjust="spacing">OHIO</text>
<text x="1148" y="210.2" textLength="10.0" lengthAdjust="spacing">NJ</text>
<text x="1093" y="215.8" textLength="46.0" lengthAdjust="spacing">MARYLAND</text>
<text x="1135.7" y="226.2" textLength="9.3" lengthAdjust="spacing">DE</text>
<text x="774" y="235.7" textLength="32.4" lengthAdjust="spacing">KANSAS</text>
<text x="861" y="239.5" textLength="38.5" lengthAdjust="spacing">MISSOURI</text>
<text x="1045" y="231.5" textLength="21.0" lengthAdjust="spacing">WEST</text>
<text x="1037.4" y="239.5" textLength="35.9" lengthAdjust="spacing">VIRGINIA</text>
<text x="972.7" y="256.9" textLength="43.3" lengthAdjust="spacing">KENTUCKY</text>
<text x="1072" y="256.9" textLength="34.0" lengthAdjust="spacing">VIRGINIA</text>
<text x="783.8" y="289.1" textLength="45.8" lengthAdjust="spacing">OKLAHOMA</text>
<text x="945.8" y="289.1" textLength="45.8" lengthAdjust="spacing">TENNESSEE</text>
<text x="1072" y="287.2" textLength="28.0" lengthAdjust="spacing">NORTH</text>
<text x="1065.8" y="294.7" textLength="40.6" lengthAdjust="spacing">CAROLINA</text>
<text x="859.8" y="307.5" textLength="43.5" lengthAdjust="spacing">ARKANSAS</text>
<text x="1049" y="318.3" textLength="27.6" lengthAdjust="spacing">SOUTH</text>
<text x="1043.6" y="325.9" textLength="40.1" lengthAdjust="spacing">CAROLINA</text>
<text x="899.5" y="329.2" textLength="48.2" lengthAdjust="spacing">MISSISSIPPI</text>
<text x="949" y="341.0" textLength="39.3" lengthAdjust="spacing">ALABAMA</text>
<text x="1003.4" y="346.7" textLength="35.4" lengthAdjust="spacing">GEORGIA</text>
<text x="767" y="365.5" textLength="26.2" lengthAdjust="spacing">TEXAS</text>
<text x="871" y="385.9" textLength="42.7" lengthAdjust="spacing">LOUISIANA</text>
<text x="1034" y="437.9" textLength="35.5" lengthAdjust="spacing">FLORIDA</text>
<text x="720" y="426.0" textLength="40.0" lengthAdjust="spacing">COAHUILA</text>
<text x="740" y="451.1" textLength="52.0" lengthAdjust="spacing">NUEVO LEON</text>
<text x="757.8" y="489.8" textLength="51.9" lengthAdjust="spacing">TAMAULIPAS</text>
<text x="744.6" y="520.5" textLength="37.8" lengthAdjust="spacing">SAN LUIS</text>
</g>
<g font-size="7" fill="#6a6d70" stroke="#6a6d70" stroke-width="0.25" stroke-linejoin="round">
<text x="491" y="210.2" textLength="33.0" lengthAdjust="spacing">NEVADA</text>
<text x="576" y="223.5" textLength="22.0" lengthAdjust="spacing">UTAH</text>
<text x="660" y="231.5" textLength="44.0" lengthAdjust="spacing">COLORADO</text>
<text x="441" y="273.9" textLength="48.0" lengthAdjust="spacing">CALIFORNIA</text>
<text x="569.6" y="315.0" textLength="35.9" lengthAdjust="spacing">ARIZONA</text>
<text x="648" y="318.5" textLength="52.0" lengthAdjust="spacing">NEW MEXICO</text>
<text x="522.4" y="374.1" textLength="19.6" lengthAdjust="spacing">BAJA</text>
<text x="508" y="381.5" textLength="49.0" lengthAdjust="spacing">CALIFORNIA</text>
<text x="591" y="387.3" textLength="33.4" lengthAdjust="spacing">SONORA</text>
<text x="653" y="401.5" textLength="47.0" lengthAdjust="spacing">CHIHUAHUA</text>
<text x="577" y="474.2" textLength="20.0" lengthAdjust="spacing">BAJA</text>
<text x="553.6" y="481.3" textLength="68.4" lengthAdjust="spacing">CALIFORNIA SUR</text>
<text x="634" y="475.5" textLength="34.0" lengthAdjust="spacing">SINALOA</text>
<text x="675.5" y="478.5" textLength="39.5" lengthAdjust="spacing">DURANGO</text>
<text x="1074" y="189.3" textLength="62.0" lengthAdjust="spacing">PENNSYLVANIA</text>
<text x="909" y="201.5" textLength="34.0" lengthAdjust="spacing">ILLINOIS</text>
<text x="959.5" y="201.5" textLength="34.5" lengthAdjust="spacing">INDIANA</text>
<text x="1018.5" y="200.3" textLength="19.5" lengthAdjust="spacing">OHIO</text>
<text x="1148" y="210.2" textLength="10.0" lengthAdjust="spacing">NJ</text>
<text x="1093" y="215.8" textLength="46.0" lengthAdjust="spacing">MARYLAND</text>
<text x="1135.7" y="226.2" textLength="9.3" lengthAdjust="spacing">DE</text>
<text x="774" y="235.7" textLength="32.4" lengthAdjust="spacing">KANSAS</text>
<text x="861" y="239.5" textLength="38.5" lengthAdjust="spacing">MISSOURI</text>
<text x="1045" y="231.5" textLength="21.0" lengthAdjust="spacing">WEST</text>
<text x="1037.4" y="239.5" textLength="35.9" lengthAdjust="spacing">VIRGINIA</text>
<text x="972.7" y="256.9" textLength="43.3" lengthAdjust="spacing">KENTUCKY</text>
<text x="1072" y="256.9" textLength="34.0" lengthAdjust="spacing">VIRGINIA</text>
<text x="783.8" y="289.1" textLength="45.8" lengthAdjust="spacing">OKLAHOMA</text>
<text x="945.8" y="289.1" textLength="45.8" lengthAdjust="spacing">TENNESSEE</text>
<text x="1072" y="287.2" textLength="28.0" lengthAdjust="spacing">NORTH</text>
<text x="1065.8" y="294.7" textLength="40.6" lengthAdjust="spacing">CAROLINA</text>
<text x="859.8" y="307.5" textLength="43.5" lengthAdjust="spacing">ARKANSAS</text>
<text x="1049" y="318.3" textLength="27.6" lengthAdjust="spacing">SOUTH</text>
<text x="1043.6" y="325.9" textLength="40.1" lengthAdjust="spacing">CAROLINA</text>
<text x="899.5" y="329.2" textLength="48.2" lengthAdjust="spacing">MISSISSIPPI</text>
<text x="949" y="341.0" textLength="39.3" lengthAdjust="spacing">ALABAMA</text>
<text x="1003.4" y="346.7" textLength="35.4" lengthAdjust="spacing">GEORGIA</text>
<text x="767" y="365.5" textLength="26.2" lengthAdjust="spacing">TEXAS</text>
<text x="871" y="385.9" textLength="42.7" lengthAdjust="spacing">LOUISIANA</text>
<text x="1034" y="437.9" textLength="35.5" lengthAdjust="spacing">FLORIDA</text>
<text x="720" y="426.0" textLength="40.0" lengthAdjust="spacing">COAHUILA</text>
<text x="740" y="451.1" textLength="52.0" lengthAdjust="spacing">NUEVO LEON</text>
<text x="757.8" y="489.8" textLength="51.9" lengthAdjust="spacing">TAMAULIPAS</text>
<text x="744.6" y="520.5" textLength="37.8" lengthAdjust="spacing">SAN LUIS</text>
</g>
<g font-weight="700" fill="#202124" stroke="#fff" stroke-width="2.2" paint-order="stroke" stroke-linejoin="round">
<text x="702" y="213.3" font-size="13" textLength="82.0" lengthAdjust="spacingAndGlyphs">United States</text>
<text x="705" y="498.7" font-size="13" textLength="44.0" lengthAdjust="spacingAndGlyphs">Mexico</text>
<text x="1093" y="479.9" font-size="9.5" textLength="15.8" lengthAdjust="spacingAndGlyphs">The</text>
<text x="1081.4" y="488.8" font-size="9.5" textLength="39.2" lengthAdjust="spacingAndGlyphs">Bahamas</text>
</g>
<g font-size="7" fill="#3f8ea6">
<text x="905.6" y="469.5" textLength="23.4" lengthAdjust="spacingAndGlyphs">Gulf of</text>
<text x="903" y="477.1" textLength="27.7" lengthAdjust="spacingAndGlyphs">America</text>
</g>
<text x="0" y="0" font-size="7" fill="#3f8ea6" transform="translate(577,416) rotate(57)" textLength="54" lengthAdjust="spacingAndGlyphs">Gulf of California</text>
<circle cx="1161.8" cy="189.5" r="1.9" fill="#c5221f" stroke="#fff" stroke-width="0.8"/>
<text x="1164.5" y="193" font-size="9.5" font-weight="700" fill="#3b3b3b" stroke="#fff" stroke-width="2" paint-order="stroke" textLength="33" lengthAdjust="spacingAndGlyphs">New York</text>
<path d="M727,353.8 C725.8,348.8 718.4,344.5 718.4,338 A8.6,8.6 0 1,1 735.6,338 C735.6,344.5 728.2,348.8 727,353.8 Z" fill="none" stroke="#fff" stroke-opacity="0.55" stroke-width="2.6"/>
<path d="M727,353.8 C725.8,348.8 718.4,344.5 718.4,338 A8.6,8.6 0 1,1 735.6,338 C735.6,344.5 728.2,348.8 727,353.8 Z" fill="#ea4335" stroke="#c5221f" stroke-width="0.9"/>
<circle cx="727" cy="338" r="3.2" fill="#b31412"/>
<path d="M803.7,291.3 C802.5,286.3 795.1,282.0 795.1,275.5 A8.6,8.6 0 1,1 812.3000000000001,275.5 C812.3000000000001,282.0 804.9000000000001,286.3 803.7,291.3 Z" fill="none" stroke="#fff" stroke-opacity="0.55" stroke-width="2.6"/>
<path d="M803.7,291.3 C802.5,286.3 795.1,282.0 795.1,275.5 A8.6,8.6 0 1,1 812.3000000000001,275.5 C812.3000000000001,282.0 804.9000000000001,286.3 803.7,291.3 Z" fill="#ea4335" stroke="#c5221f" stroke-width="0.9"/>
<circle cx="803.7" cy="275.5" r="3.2" fill="#b31412"/>
<path d="M966.6,277.8 C965.4,272.8 958.0,268.5 958.0,262 A8.6,8.6 0 1,1 975.2,262 C975.2,268.5 967.8000000000001,272.8 966.6,277.8 Z" fill="none" stroke="#fff" stroke-opacity="0.55" stroke-width="2.6"/>
<path d="M966.6,277.8 C965.4,272.8 958.0,268.5 958.0,262 A8.6,8.6 0 1,1 975.2,262 C975.2,268.5 967.8000000000001,272.8 966.6,277.8 Z" fill="#ea4335" stroke="#c5221f" stroke-width="0.9"/>
<circle cx="966.6" cy="262" r="3.2" fill="#b31412"/>
<path d="M1100.9,259.8 C1099.7,254.8 1092.3000000000002,250.5 1092.3000000000002,244 A8.6,8.6 0 1,1 1109.5,244 C1109.5,250.5 1102.1000000000001,254.8 1100.9,259.8 Z" fill="none" stroke="#fff" stroke-opacity="0.55" stroke-width="2.6"/>
<path d="M1100.9,259.8 C1099.7,254.8 1092.3000000000002,250.5 1092.3000000000002,244 A8.6,8.6 0 1,1 1109.5,244 C1109.5,250.5 1102.1000000000001,254.8 1100.9,259.8 Z" fill="#ea4335" stroke="#c5221f" stroke-width="0.9"/>
<circle cx="1100.9" cy="244" r="3.2" fill="#b31412"/>
<path d="M842.9,400.8 C841.6999999999999,395.8 834.3,391.5 834.3,385 A8.6,8.6 0 1,1 851.5,385 C851.5,391.5 844.1,395.8 842.9,400.8 Z" fill="none" stroke="#fff" stroke-opacity="0.55" stroke-width="2.6"/>
<path d="M842.9,400.8 C841.6999999999999,395.8 834.3,391.5 834.3,385 A8.6,8.6 0 1,1 851.5,385 C851.5,391.5 844.1,395.8 842.9,400.8 Z" fill="#ea4335" stroke="#c5221f" stroke-width="0.9"/>
<circle cx="842.9" cy="385" r="3.2" fill="#b31412"/>
<path d="M890,397.8 C888.8,392.8 881.4,388.5 881.4,382 A8.6,8.6 0 1,1 898.6,382 C898.6,388.5 891.2,392.8 890,397.8 Z" fill="none" stroke="#fff" stroke-opacity="0.55" stroke-width="2.6"/>
<path d="M890,397.8 C888.8,392.8 881.4,388.5 881.4,382 A8.6,8.6 0 1,1 898.6,382 C898.6,388.5 891.2,392.8 890,397.8 Z" fill="#ea4335" stroke="#c5221f" stroke-width="0.9"/>
<circle cx="890" cy="382" r="3.2" fill="#b31412"/><g>
 <rect x="263.3" y="194.2" width="128.8" height="26.5" rx="2" fill="#000" opacity="0.08"/>
 <rect x="263.3" y="193.5" width="128.8" height="26.5" rx="2" fill="#fff"/>
 <rect x="317" y="194" width="0.8" height="26" fill="#ebebeb"/>
 <text x="279.6" y="210.6" font-size="12" font-weight="700" fill="#000" textLength="22.5" lengthAdjust="spacingAndGlyphs">Map</text>
 <text x="333.6" y="210.6" font-size="12" fill="#565656" textLength="43.4" lengthAdjust="spacingAndGlyphs">Satellite</text>
</g>
<g>
 <circle cx="1176.5" cy="416.8" r="13.5" fill="#000" opacity="0.07"/>
 <circle cx="1176.5" cy="416" r="13.5" fill="#fff"/>
 <g fill="none" stroke="#666" stroke-width="1.3">
  <path d="M1173.5,410.5 L1176.5,407.8 L1179.5,410.5"/>
  <path d="M1173.5,421.5 L1176.5,424.2 L1179.5,421.5"/>
  <path d="M1171,413 L1168.3,416 L1171,419"/>
  <path d="M1182,413 L1184.7,416 L1182,419"/>
 </g>
</g>
<g>
 <rect x="1163" y="451.8" width="27" height="54" rx="2" fill="#000" opacity="0.07"/>
 <rect x="1163" y="451" width="27" height="54" rx="2" fill="#fff"/>
 <rect x="1167" y="477.8" width="19" height="0.8" fill="#e6e6e6"/>
 <path d="M1176.5,458.5 V469.5 M1171,464 H1182" stroke="#666" stroke-width="1.5"/>
 <path d="M1171,491.5 H1182" stroke="#666" stroke-width="1.5"/>
</g>
<g font-size="13" font-weight="400" stroke="#fff" stroke-opacity="0.6" stroke-width="1.5" paint-order="stroke">
 <text x="263.8" y="516.2" textLength="37.2" lengthAdjust="spacingAndGlyphs"><tspan fill="#4285f4">G</tspan><tspan fill="#ea4335">o</tspan><tspan fill="#fbbc05">o</tspan><tspan fill="#4285f4">g</tspan><tspan fill="#34a853">l</tspan><tspan fill="#ea4335">e</tspan></text>
</g>
<g>
 <rect x="939" y="512.3" width="258" height="10" fill="#fff" opacity="0.7"/>
 <rect x="1004.3" y="512.3" width="1" height="10" fill="#72d4e8" opacity="0.4"/>
 <rect x="1105.5" y="512.3" width="1" height="10" fill="#72d4e8" opacity="0.4"/>
 <rect x="1170.5" y="512.3" width="1" height="10" fill="#72d4e8" opacity="0.4"/>
 <g font-size="6.3" fill="#333">
  <text x="942.5" y="518.8" textLength="58.5" lengthAdjust="spacingAndGlyphs">Keyboard shortcuts</text>
  <text x="1009" y="518.8" textLength="93.5" lengthAdjust="spacingAndGlyphs">Map data ©2025 Google, INEGI</text>
  <text x="1109.7" y="518.8" textLength="21.3" lengthAdjust="spacingAndGlyphs">200 km</text>
  <text x="1173.8" y="518.8" textLength="19.5" lengthAdjust="spacingAndGlyphs">Terms</text>
 </g>
 <path d="M1134.5,514.5 V518 H1165.5 V514.5" fill="none" stroke="#222" stroke-width="1.3"/>
</g>

</svg>
</div>
</div>
<div class="t" style="left:270.5px;top:134.5px;font-size:14px;letter-spacing:-0.4px;color:#333">Locations</div>
<div class="a" style="left:997px;top:129px;width:92px;height:24px;background:#2c9510;border-radius:3px 0 0 3px"></div>
<div class="a" style="left:1088px;top:129px;width:106px;height:24px;background:#0b2d62;border-radius:0 3px 3px 0"></div>
<svg class="ic" style="left:1006px;top:137px" width="11" height="9" viewBox="0 0 11 9"><rect x="0.8" y="0.8" width="9" height="7.4" fill="none" stroke="#fff" stroke-width="1.3"/><path d="M0.8,4.5 H9.8 M5.3,0.8 V8.2" stroke="#fff" stroke-width="1.1"/></svg>
<div class="t" style="left:1023.5px;top:137.4px;font-size:9.4px;font-weight:700;color:#fff;letter-spacing:0.35px">Show table</div>
<svg class="ic" style="left:1097px;top:136px" width="10" height="10" viewBox="0 0 10 10"><path d="M5,1 V9 M1,5 H9" stroke="#fff" stroke-width="1.3"/></svg>
<div class="t" style="left:1114.3px;top:137.8px;font-size:9.3px;font-weight:700;color:#fff;letter-spacing:0.4px">Add Locations</div>
<div class="a" style="left:257px;top:162.5px;width:132px;height:24.5px;border:1px solid #5b73a0;border-radius:3px;background:#fff"></div>
<div class="t" style="left:269px;top:170.5px;font-size:9.7px;color:#38578a;letter-spacing:0.55px;-webkit-text-stroke:0.15px #38578a">Mark Location on Map</div>

</body></html>
